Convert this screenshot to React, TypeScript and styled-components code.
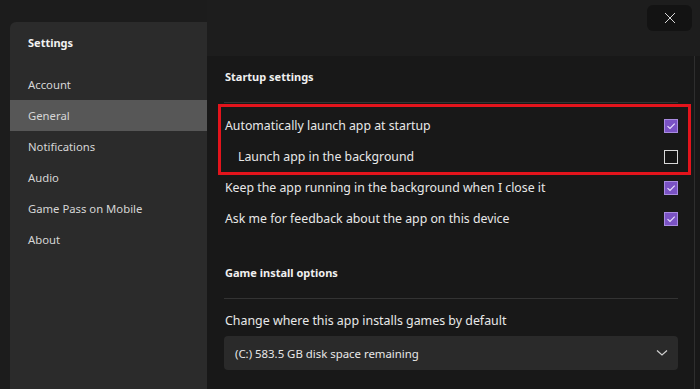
import React from 'react';
import styled, { createGlobalStyle } from 'styled-components';

const GlobalStyle = createGlobalStyle`
  html, body {
    margin: 0;
    padding: 0;
    background: #1c1c1c;
  }
  * {
    box-sizing: border-box;
  }
`;

const Page = styled.div`
  display: flex;
  width: 700px;
  height: 389px;
  overflow: hidden;
  background: #1c1c1c;
  font-family: 'Noto Sans', 'Open Sans', sans-serif;
  color: #e8e8e8;
`;

const Sidebar = styled.nav`
  width: 197px;
  margin: 22px 0 0 10px;
  background: #2b2b2b;
  border-radius: 6px 0 0 0;
  display: flex;
  flex-direction: column;
`;

const SidebarTitle = styled.div`
  padding: 13px 18px 18px;
  font-size: 11px;
  line-height: 16px;
  font-weight: 700;
  color: #f2f2f2;
`;

const NavItem = styled.div<{ $active?: boolean }>`
  height: 31px;
  display: flex;
  align-items: center;
  padding-left: 18px;
  font-size: 11.3px;
  color: #d6d6d6;
  background: ${(p) => (p.$active ? '#575757' : 'transparent')};
`;

const Main = styled.main`
  flex: 1;
  display: flex;
  flex-direction: column;
  background: #181818;
`;

const TopBar = styled.div`
  height: 56px;
  display: flex;
  justify-content: flex-end;
  align-items: flex-start;
  padding: 5px 8px 0 0;
  background: #1d1d1d;
`;

const CloseButton = styled.button`
  width: 45px;
  height: 26px;
  border: none;
  border-radius: 6px;
  background: #131313;
  display: flex;
  align-items: center;
  justify-content: center;
  padding: 0;
`;

const Content = styled.div`
  flex: 1;
  margin-right: 5px;
  padding: 0 16px 0 17px;
  border-right: 1px solid #2e2e2e;
  display: flex;
  flex-direction: column;
`;

const SectionTitle = styled.div<{ $top: number }>`
  padding: ${(p) => p.$top}px 1px 17px;
  font-size: 11px;
  line-height: 16px;
  font-weight: 700;
  color: #f0f0f0;
`;

const Divider = styled.div<{ $after: number }>`
  height: 1px;
  background: #333333;
  margin-bottom: ${(p) => p.$after}px;
`;

const HighlightGroup = styled.div`
  position: relative;

  &::after {
    content: '';
    position: absolute;
    top: -6px;
    bottom: -3px;
    left: -6px;
    right: -13px;
    border: 3px solid #e3141c;
    pointer-events: none;
  }
`;

const Row = styled.div<{ $indent?: boolean }>`
  height: 31px;
  display: flex;
  align-items: center;
  justify-content: space-between;
  padding-left: ${(p) => (p.$indent ? 14 : 1)}px;
  font-size: 12.3px;
  color: #e8e8e8;
`;

const Box = styled.span<{ $checked: boolean }>`
  width: 14px;
  height: 14px;
  border: 1px solid ${(p) => (p.$checked ? '#a88be0' : '#d8d8d8')};
  background: ${(p) => (p.$checked ? '#7a52c4' : '#141414')};
  display: flex;
  align-items: center;
  justify-content: center;
`;

const FieldLabel = styled.div`
  margin-top: 14px;
  padding-left: 1px;
  font-size: 12.4px;
  line-height: 16px;
  color: #e8e8e8;
`;

const Select = styled.div`
  margin-top: 7px;
  height: 34px;
  border-radius: 4px;
  background: #2a2a2a;
  display: flex;
  align-items: center;
  justify-content: space-between;
  padding: 0 10px 0 11px;
  font-size: 11.4px;
  color: #e8e8e8;
`;

const Checkbox = ({ checked }: { checked: boolean }) => (
  <Box $checked={checked}>
    {checked && (
      <svg width="10" height="10" viewBox="0 0 10 10">
        <path d="M1.5 5.2 L4 7.5 L8.7 2.6" fill="none" stroke="#e9e0ff" strokeWidth="1.1" />
      </svg>
    )}
  </Box>
);

const navItems = ['Account', 'General', 'Notifications', 'Audio', 'Game Pass on Mobile', 'About'];

export default function App() {
  return (
    <Page>
      <GlobalStyle />
      <Sidebar>
        <SidebarTitle>Settings</SidebarTitle>
        {navItems.map((item) => (
          <NavItem key={item} $active={item === 'General'}>
            {item}
          </NavItem>
        ))}
      </Sidebar>
      <Main>
        <TopBar>
          <CloseButton aria-label="Close">
            <svg width="12" height="12" viewBox="0 0 12 12">
              <path d="M1 1 L11 11 M11 1 L1 11" stroke="#d8d8d8" strokeWidth="1" />
            </svg>
          </CloseButton>
        </TopBar>
        <Content>
          <SectionTitle $top={13}>Startup settings</SectionTitle>
          <Divider $after={7} />
          <HighlightGroup>
            <Row>
              Automatically launch app at startup
              <Checkbox checked />
            </Row>
            <Row $indent>
              Launch app in the background
              <Checkbox checked={false} />
            </Row>
          </HighlightGroup>
          <Row>
            Keep the app running in the background when I close it
            <Checkbox checked />
          </Row>
          <Row>
            Ask me for feedback about the app on this device
            <Checkbox checked />
          </Row>
          <SectionTitle $top={31}>Game install options</SectionTitle>
          <Divider $after={0} />
          <FieldLabel>Change where this app installs games by default</FieldLabel>
          <Select>
            (C:) 583.5 GB disk space remaining
            <svg width="12" height="8" viewBox="0 0 12 8">
              <path d="M1 1.5 L6 6 L11 1.5" fill="none" stroke="#cfcfcf" strokeWidth="1.2" />
            </svg>
          </Select>
        </Content>
      </Main>
    </Page>
  );
}
